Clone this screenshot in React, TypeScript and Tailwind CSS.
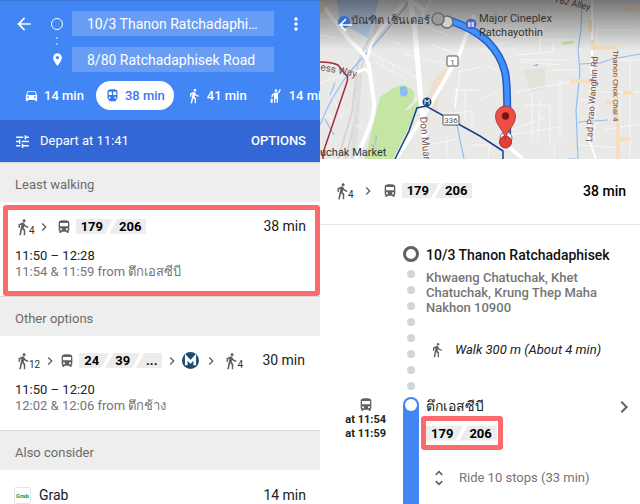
import React from "react";
import {
  MdArrowBack,
  MdChevronRight,
  MdDirectionsBus,
  MdDirectionsCar,
  MdDirectionsTransit,
  MdDirectionsWalk,
  MdHail,
  MdMoreVert,
  MdPlace,
  MdTune,
  MdUnfoldMore,
} from "react-icons/md";

const slant = {
  first: "pl-[5px] pr-[10px] [clip-path:polygon(0_0,100%_0,calc(100%_-_8px)_100%,0_100%)]",
  middle: "-ml-1 px-[10px] [clip-path:polygon(8px_0,100%_0,calc(100%_-_8px)_100%,0_100%)]",
  last: "-ml-1 pl-[10px] pr-[5px] [clip-path:polygon(8px_0,100%_0,100%_100%,0_100%)]",
};

function RouteBadges({ lines }: { lines: string[] }) {
  return (
    <span className="flex text-[13px] leading-[15px] font-bold text-black">
      {lines.map((line, i) => (
        <span
          key={line}
          className={`bg-[#ececec] ${i === 0 ? slant.first : i === lines.length - 1 ? slant.last : slant.middle}`}
        >
          {line}
        </span>
      ))}
    </span>
  );
}

function Walk({ minutes }: { minutes: number }) {
  return (
    <span className="flex items-end text-[#616161]">
      <MdDirectionsWalk size={18} className="-ml-px" />
      <span className="-ml-[3px] text-[10px] leading-[10px] text-[#333]">{minutes}</span>
    </span>
  );
}

function Step() {
  return <MdChevronRight size={16} className="text-[#616161]" />;
}

function Metro() {
  return (
    <svg width="17" height="17" viewBox="0 0 18 18" role="img" aria-label="MRT">
      <circle cx="9" cy="9" r="9" fill="#1c4b70" />
      <path d="M4.500 14V5.500L9 10.500l4.500-5V14" fill="none" stroke="#fff" strokeWidth="2.800" />
    </svg>
  );
}

function SectionTitle({ children }: { children: React.ReactNode }) {
  return (
    <h2 className="border-t border-[#d9d9d9] bg-[#eeeeee] px-[15px] pt-[14px] pb-[9px] text-[13px] leading-4 text-[#6b6b6b]">
      {children}
    </h2>
  );
}

function Times({ span, from }: { span: string; from: string }) {
  return (
    <div className="text-[13px] leading-4">
      <p className="text-[#212121]">{span}</p>
      <p className="text-[#757575]">{from}</p>
    </div>
  );
}

const fieldStyle =
  "h-[25px] w-full min-w-0 bg-[#689df6] pl-[15px] pr-[10px] text-[14px] text-white outline-none text-ellipsis";

function Directions() {
  return (
    <section className="flex min-w-0 flex-1 flex-col bg-white">
      <header className="border-t border-[#3a76d8] bg-[#4285f4] text-white">
        <div className="flex px-[14px] pt-[10px]">
          <button aria-label="Back" className="h-[25px] w-9">
            <MdArrowBack size={20} />
          </button>
          <div className="flex w-[22px] shrink-0 flex-col items-start pt-[7px]">
            <span className="ml-px size-3 rounded-full border border-white" />
            <span className="mt-[7px] ml-[6px] size-[2px] rounded-full bg-[#b3cefb]" />
            <span className="mt-1 ml-[6px] size-[2px] rounded-full bg-[#b3cefb]" />
            <MdPlace size={15} className="mt-[7px]" />
          </div>
          <div className="flex min-w-0 flex-1 flex-col gap-[11px]">
            <input aria-label="Starting point" readOnly value="10/3 Thanon Ratchadaphi…" className={fieldStyle} />
            <input aria-label="Destination" readOnly value="8/80 Ratchadaphisek Road" className={fieldStyle} />
          </div>
          <button aria-label="More" className="flex h-[25px] w-8 items-center justify-end">
            <MdMoreVert size={20} />
          </button>
        </div>
        <nav className="mt-[9px] flex h-[39px] items-start overflow-hidden pl-6 text-[13px] font-medium whitespace-nowrap">
          <button className="flex h-[29px] shrink-0 items-center gap-[5px]">
            <MdDirectionsCar size={15} /> 14 min
          </button>
          <button className="ml-3 flex h-[29px] shrink-0 items-center gap-[5px] rounded-full bg-white px-[9px] text-[#3b78e7]">
            <MdDirectionsTransit size={15} /> 38 min
          </button>
          <button className="ml-3 flex h-[29px] shrink-0 items-center gap-[5px]">
            <MdDirectionsWalk size={16} /> 41 min
          </button>
          <button className="ml-[21px] flex h-[29px] shrink-0 items-center gap-[5px]">
            <MdHail size={16} /> 14 min
          </button>
        </nav>
      </header>
      <div className="flex h-[42px] items-center bg-[#3367d6] px-[14px] text-[13px] text-white">
        <MdTune size={17} />
        <button className="ml-[9px]">Depart at 11:41</button>
        <button className="ml-auto font-medium">OPTIONS</button>
      </div>

      <SectionTitle>Least walking</SectionTitle>
      <article className="mt-[3px] ml-[3px] h-[91px] rounded-[3px] border-[5px] border-[#fb6b6d] pr-[9px] pl-[7px]">
        <div className="mt-[7px] flex h-[19px] items-center">
          <Walk minutes={4} />
          <span className="mr-1 ml-px"><Step /></span>
          <MdDirectionsBus size={16} className="mr-1 text-[#616161]" />
          <RouteBadges lines={["179", "206"]} />
          <span className="ml-auto text-[14px] text-[#212121]">38 min</span>
        </div>
        <div className="mt-3">
          <Times span="11:50 – 12:28" from="11:54 & 11:59 from ตึกเอสซีบี" />
        </div>
      </article>

      <SectionTitle>Other options</SectionTitle>
      <article className="h-[94px] px-[15px] pt-[15px]">
        <div className="flex h-[19px] items-center">
          <Walk minutes={12} />
          <span className="ml-[2px]"><Step /></span>
          <MdDirectionsBus size={16} className="mr-1 ml-px text-[#616161]" />
          <RouteBadges lines={["24", "39", "..."]} />
          <span className="mx-[2px]"><Step /></span>
          <Metro />
          <span className="mx-1"><Step /></span>
          <Walk minutes={4} />
          <span className="ml-auto text-[14px] text-[#212121]">30 min</span>
        </div>
        <div className="mt-3">
          <Times span="11:50 – 12:20" from="12:02 & 12:06 from ตึกช้าง" />
        </div>
      </article>

      <SectionTitle>Also consider</SectionTitle>
      <div className="flex h-[34px] items-end px-[14px] text-[14px] leading-[18px] text-[#212121]">
        <span className="mr-2 flex size-[17px] items-center justify-center rounded-[2px] border border-[#e3e3e3] text-[6px] font-black text-[#1aab4b]">
          Grab
        </span>
        Grab
        <span className="ml-auto">14 min</span>
      </div>
    </section>
  );
}

function RouteMap() {
  return (
    <svg
      className="block h-[159px] w-full"
      viewBox="0 0 320 159"
      preserveAspectRatio="xMidYMid slice"
      role="img"
      aria-label="Route map"
    >
      <defs>
        <linearGradient id="shade" x1="0" y1="0" x2="0" y2="1">
          <stop offset="0" stopColor="#000" stopOpacity="0.5" />
          <stop offset="0.5" stopColor="#000" stopOpacity="0.25" />
          <stop offset="1" stopColor="#000" stopOpacity="0" />
        </linearGradient>
      </defs>
      <rect width="320" height="159" fill="#e9e9e8" />
      <path d="M17 0h42l-11 38-28-15z" fill="#bfd4f2" />
      <path d="M60 97l13-9 10-3 9 4 3 5-3 9-8 8 6-2 8-9 2 1-9 22-18 36H45l7-30z" fill="#c5e6a2" />
      <path d="M80 87l6-1 2 6-2 5-6-2z" fill="#8cbcf5" />
      <path d="M55 137q2-4 1 3t-4 5 5 4" fill="none" stroke="#8cbcf5" />
      <path d="M112 83l10-12 4-3-8 33 0 10-14-1 4-15z" fill="#ecdfcf" />
      <path d="M203 70l22-2v21l-14 3z" fill="#e0e3da" />
      <path d="M213 66l5-3v3z" fill="#8cbcf5" />
      <path d="M242 42l12-2v3l-12 2z" fill="#c5e6a2" />
      <g fill="none" stroke="#d4d4d4">
        <path d="M58 20L38 62l-6 50-14 47M60 20L42 65l-6 50-10 44" strokeWidth="2" />
        <path d="M40 70L33 159" strokeWidth="5" stroke="#dedede" />
      </g>
      <g fill="none" stroke="#f7f7f7" strokeWidth="1">
        <path d="M50 52l47 26M55 62l28 15M65 58l-4 7M75 64l-4 7M84 54l12 3M70 40l13 6M100 24l30 12M112 45l25 9M107 60l18 3" />
        <path d="M0 20l20 2M0 35l16 3M0 83l20-7M10 90l12 28M0 116h11v28M35 125l8 4M140 71l-2 18-7 15M138 72l22-5M133 90h27M145 90v30M118 115l34-4v20M127 136v23M110 145l26-6" />
        <path d="M160 50l30-9M165 65l24 12M200 62l42 3M180 90l-20 10M195 55l38-3v-9M196 92l64-12M205 105h25v40M212 92v50M220 100l-2 40M240 80v60M225 118l-35 12M190 135l50-8" />
        <path d="M220 20v32M228 10l-8 30h35M250 60h-50M233 70h24M265 30h50M278 20l-2 24M288 60h32M280 92h40M300 100v45M276 105l-2 35M310 60v99M283 130l37-6M260 100h14M258 145l45 3M234 145v14M150 145h20l-2 14" />
      </g>
      <g fill="none" stroke="#8fbdf6" strokeWidth="1.200">
        <path d="M90 0Q80 15 60 38L29 73Q12 95 0 125M15 83l-5 12M5 119l9 16" />
        <path d="M262 0l-1 30-3 20 2 22-4 38 2 49M260 64l20-1 12-4 28-5M258 122l30-2M136 120l8 39M248 159h8" />
      </g>
      <path d="M111 0l-15 27M137 88l-2 20" stroke="#fff" strokeWidth="1.500" />
      <g fill="none" stroke="#fff" strokeLinejoin="round">
        <path d="M4 7l26 34q18 15 19 26l5 35q1 14-10 38l-8 19" strokeWidth="4" />
        <path d="M84 3L58 33q-9 11-10 25M30 75l15-6 6 5" strokeWidth="3" />
        <path d="M90 0l5 31 6 71 6 57" strokeWidth="5" />
        <path d="M154 15l-15 40-30 52-33 52M183 142l20 17M90 0l14 10" strokeWidth="4" />
        <path d="M272 0v55l-3 85 7 19" strokeWidth="2" />
      </g>
      <g fill="none" stroke="#f6dfc0" strokeWidth="4">
        <path d="M270 20v12M273 48h25M273 40v10M250 81h22M296 51v56l2 15v37M303 93h10M303 10h15M286 102h12M298 139h12" />
        <path d="M126 70l-8 15M0 12l8-12" strokeWidth="3" />
      </g>
      <path d="M0 62q12 0 18 3l7 9q4 2 2 8L3 153v6" fill="none" stroke="#a32a3f" strokeWidth="1.500" />
      <path d="M75 159l14-28 8-23 9-2 54 30 23 15v8" fill="none" stroke="#17408b" strokeWidth="1.500" />
      <circle cx="107" cy="102" r="4.500" fill="#154a78" />
      <path d="M105 104.500v-5l2 2.500 2-2.500v5" fill="none" stroke="#fff" />
      <g fontFamily="Roboto, 'Liberation Sans', sans-serif" fill="#555">
        <g fill="#fff" stroke="#555">
          <rect x="127" y="56" width="11" height="10" rx="1" />
          <rect x="123" y="115" width="16" height="10" rx="1" />
        </g>
        <text x="132.500" y="64.500" fontSize="8" textAnchor="middle">1</text>
        <text x="131" y="123" fontSize="8" textAnchor="middle">336</text>
        <text transform="translate(0 70) rotate(11)" fontSize="10" fill="#754f4b">ess Way</text>
        <text transform="translate(100 117) rotate(85)" fontSize="10" fill="#754f4b">Don Muar</text>
        <text transform="translate(272 142) rotate(-86)" fontSize="9" fill="#754f4b">Lad Prao Wanghin Rd</text>
        <text transform="translate(293 50) rotate(90)" fontSize="8" fill="#754f4b">Thanon Chok Chai 4</text>
        <text transform="translate(234 2) rotate(13)" fontSize="9" fill="#754f4b">762 Alley</text>
        <text x="0" y="156" fontSize="11" fill="#333">uchak Market</text>
      </g>
      <rect width="320" height="50" fill="url(#shade)" />
      <path d="M128 20q25 8 39 21 14 14 18 31 3 12 2 68" fill="none" stroke="#1d5fc4" strokeWidth="8" />
      <path d="M128 20q25 8 39 21 14 14 18 31 3 12 2 68" fill="none" stroke="#4290fb" strokeWidth="5" />
      <circle cx="151" cy="24" r="5.500" fill="#5263c5" />
      <path d="M148 22h2.500v5H148zM151.500 22h2.500v5h-2.500z" fill="#c8cff5" />
      <circle cx="127" cy="22" r="6" fill="#d0d0d0" stroke="#6b6b6b" strokeWidth="1.500" />
      <circle cx="118" cy="19" r="6" fill="#999" stroke="#6b6b6b" strokeWidth="1.500" />
      <g fontFamily="Roboto, 'Liberation Sans', sans-serif" fontSize="11" fill="#333">
        <text x="159" y="22">Major Cineplex</text>
        <text x="159" y="36">Ratchayothin</text>
        <text x="31" y="24">บัณฑิต เซ็นเตอร์</text>
      </g>
      <circle cx="24" cy="22" r="6" fill="#2f6fce" />
      <path d="M32 25H20M26 19l-6 6 6 6" fill="none" stroke="#fff" strokeWidth="1.700" />
      <circle cx="186" cy="138" r="6" fill="#fff" stroke="#777" />
      <circle cx="185.500" cy="142" r="6" fill="#e53f36" stroke="#a22c29" />
      <path d="M185.500 140c-1-10-10-14-10-24a10 10 0 0 1 20 0c0 10-9 14-10 24z" fill="#ef4d46" stroke="#a22c29" strokeWidth="0.800" />
      <circle cx="185.500" cy="116" r="3.700" fill="#7a1517" />
    </svg>
  );
}

function TripDetails() {
  return (
    <section className="flex min-w-0 flex-1 flex-col bg-white">
      <RouteMap />
      <div className="flex h-[66px] items-center border-b border-[#e6e6e6] px-[14px]">
        <div className="flex flex-1 items-center pb-[2px]">
          <Walk minutes={4} />
          <span className="mx-[6px]"><Step /></span>
          <MdDirectionsBus size={16} className="mr-1 text-[#616161]" />
          <RouteBadges lines={["179", "206"]} />
        </div>
        <span className="text-[14px] font-medium text-black">38 min</span>
      </div>

      <div className="grid grid-cols-[83px_16px_1fr] pt-[21px]">
        <div />
        <div className="flex flex-col items-center">
          <span className="size-4 rounded-full border-[3px] border-[#616161]" />
          <div className="mt-2 flex flex-col gap-2">
            {Array.from({ length: 8 }, (_, i) => (
              <span key={i} className="size-2 rounded-full bg-[#cfd8dc]" />
            ))}
          </div>
        </div>
        <div className="pl-[7px]">
          <h1 className="text-[14px] leading-[18px] font-medium text-[#111]">10/3 Thanon Ratchadaphisek</h1>
          <p className="mt-[6px] max-w-[180px] text-[13px] leading-[15px] font-medium text-[#757575]">
            Khwaeng Chatuchak, Khet Chatuchak, Krung Thep Maha Nakhon 10900
          </p>
          <p className="mt-[26px] flex items-center gap-[10px] pl-[3px] text-[13px] leading-[18px] text-[#212121] italic">
            <MdDirectionsWalk size={16} className="text-[#616161]" />
            Walk 300 m (About 4 min)
          </p>
        </div>
      </div>

      <div className="grid flex-1 grid-cols-[83px_16px_1fr] pt-[7px]">
        <div className="flex flex-col items-end pr-[17px] text-[11px] leading-[14px] font-bold text-[#212121]">
          <MdDirectionsBus size={16} className="mr-3 text-[#616161]" />
          <span>at 11:54</span>
          <span>at 11:59</span>
        </div>
        <div className="flex flex-col rounded-t-full bg-[#4285f4] p-[2px]">
          <span className="size-3 rounded-full bg-white" />
        </div>
        <div className="pr-2 pl-[2px]">
          <div className="flex items-center justify-between pl-[5px] text-[14px] leading-[19px] text-[#212121]">
            ตึกเอสซีบี
            <button aria-label="Stop details" className="-my-1">
              <MdChevronRight size={24} className="-mr-1 text-[#616161]" />
            </button>
          </div>
          <div className="flex h-[34px] w-fit items-center rounded-[3px] border-[5px] border-[#fb6b6d] pr-px">
            <RouteBadges lines={["179", "206"]} />
          </div>
          <button className="mt-[18px] flex items-center gap-[10px] pl-2 text-[13px] leading-5 text-[#757575]">
            <MdUnfoldMore size={20} className="text-[#616161]" />
            Ride 10 stops (33 min)
          </button>
        </div>
      </div>
    </section>
  );
}

export default function App() {
  return (
    <main className="flex min-h-screen bg-white [font-family:Roboto,'Liberation_Sans','Noto_Sans',sans-serif]">
      <Directions />
      <TripDetails />
    </main>
  );
}
